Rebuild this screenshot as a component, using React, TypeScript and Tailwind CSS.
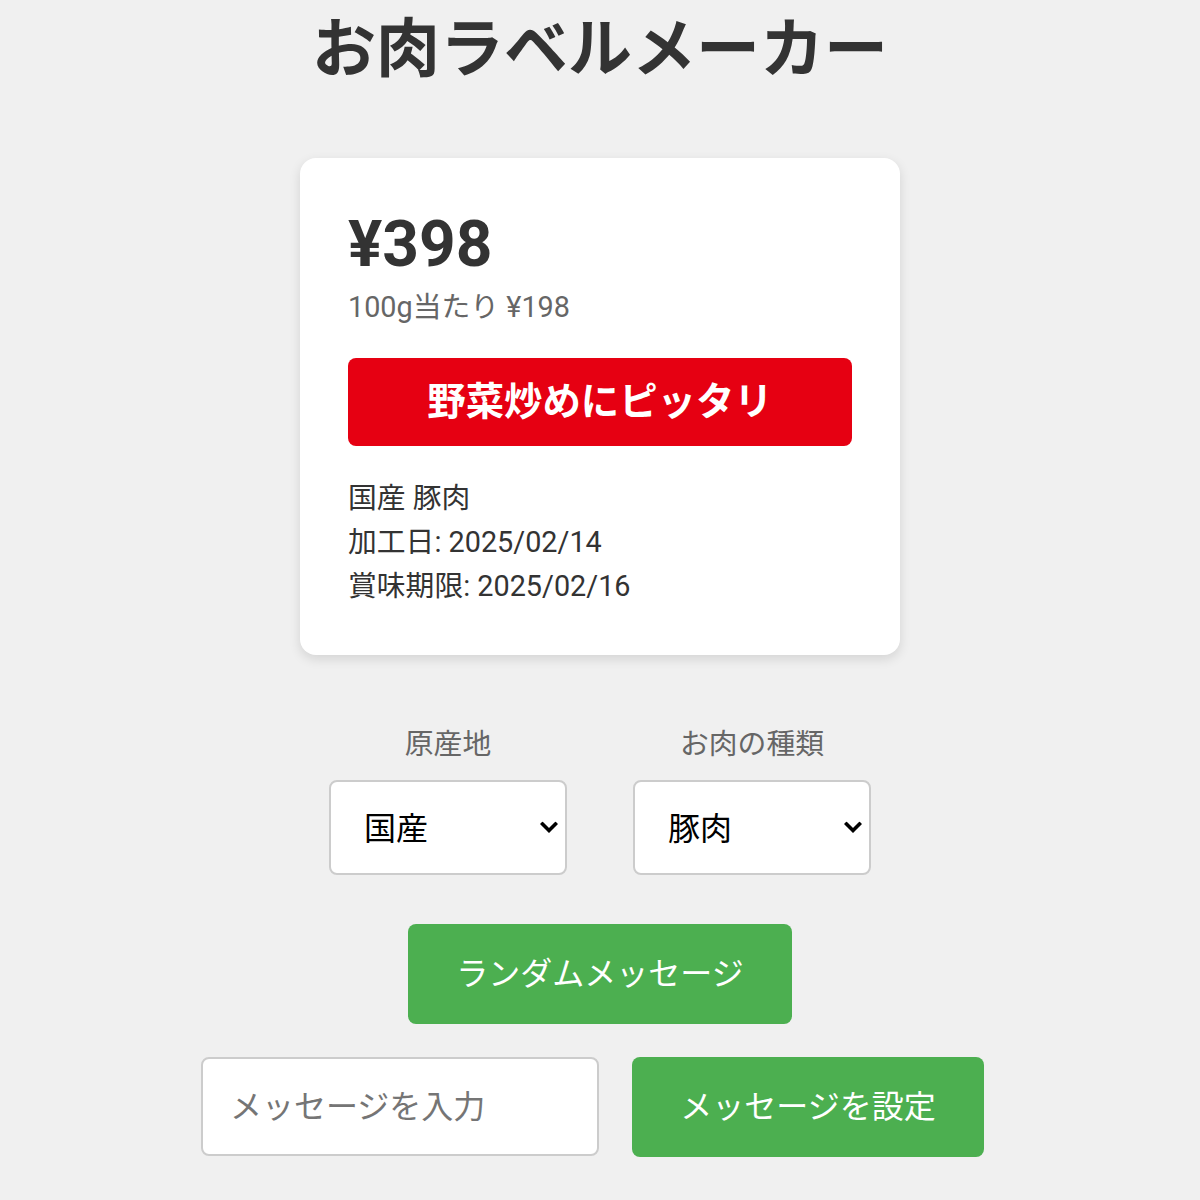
import * as React from "react";

const FONT = "font-['Roboto','Noto_Sans_CJK_JP',sans-serif]";

function Chevron(): React.JSX.Element {
  return (
    <svg
      viewBox="0 0 18 13"
      className="pointer-events-none absolute right-[9px] top-1/2 h-[13px] w-[18px] -translate-y-1/2"
    >
      <path
        d="M2.5 2.5 L9 9 L15.5 2.5"
        fill="none"
        stroke="#000"
        strokeWidth="3.6"
        strokeLinecap="square"
      />
    </svg>
  );
}

function Field({
  label,
  value,
  options,
}: {
  label: string;
  value: string;
  options: string[];
}): React.JSX.Element {
  return (
    <div className="flex flex-col items-center">
      <label className="text-[28.8px] leading-[40px] text-[#666]">{label}</label>
      <div className="relative mt-[16px] h-[95px] w-[238px]">
        <select
          defaultValue={value}
          className="h-full w-full appearance-none rounded-[8px] border-2 border-[#ccc] bg-white pl-[33px] pt-[3px] text-[32px] text-black outline-none"
        >
          {options.map((o) => (
            <option key={o}>{o}</option>
          ))}
        </select>
        <Chevron />
      </div>
    </div>
  );
}

export default function App(): React.JSX.Element {
  const [message, setMessage] = React.useState("野菜炒めにピッタリ");
  const [draft, setDraft] = React.useState("");

  return (
    <div className={`min-h-[1200px] bg-[#f0f0f0] ${FONT} text-[#333]`}>
      <div className="flex flex-col items-center">
        <h1 className="mt-[12px] text-[64px] font-bold leading-[76px] text-[#333]">
          お肉ラベルメーカー
        </h1>

        {/* Label card */}
        <div className="mt-[70px] w-[600px] rounded-[16px] bg-white px-[48px] pb-[47px] pt-[51px] shadow-[0_4px_12px_rgba(0,0,0,0.12)]">
          <div className="text-[64px] font-bold leading-[72px] text-[#333]">¥398</div>
          <div className="mt-[6px] text-[28.8px] leading-[40px] text-[#666]">
            100g当たり ¥198
          </div>
          <div className="mt-[31px] flex h-[88px] items-center justify-center rounded-[8px] bg-[#e60012] text-[38.4px] font-bold text-white">
            {message}
          </div>
          <div className="mt-[30px] flex flex-col text-[28.8px] leading-[44px] text-[#333]">
            <span>国産 豚肉</span>
            <span>加工日: 2025/02/14</span>
            <span>賞味期限: 2025/02/16</span>
          </div>
        </div>

        {/* Selectors */}
        <div className="mt-[69px] flex gap-[66px]">
          <Field label="原産地" value="国産" options={["国産", "外国産"]} />
          <Field label="お肉の種類" value="豚肉" options={["豚肉", "牛肉", "鶏肉"]} />
        </div>

        <button
          onClick={() => setMessage("野菜炒めにピッタリ")}
          className="mt-[49px] h-[100px] w-[384px] rounded-[8px] bg-[#4caf50] text-[32px] text-white"
        >
          ランダムメッセージ
        </button>

        <div className="mt-[33px] flex gap-[33px] pr-[15px]">
          <input
            value={draft}
            onChange={(e) => setDraft(e.target.value)}
            placeholder="メッセージを入力"
            className="h-[99px] w-[398px] rounded-[8px] border-2 border-[#ccc] bg-white px-[27px] text-[32px] text-[#333] outline-none placeholder:text-[#757575]"
          />
          <button
            onClick={() => draft && setMessage(draft)}
            className="h-[100px] w-[352px] rounded-[8px] bg-[#4caf50] text-[32px] text-white"
          >
            メッセージを設定
          </button>
        </div>
      </div>
    </div>
  );
}
